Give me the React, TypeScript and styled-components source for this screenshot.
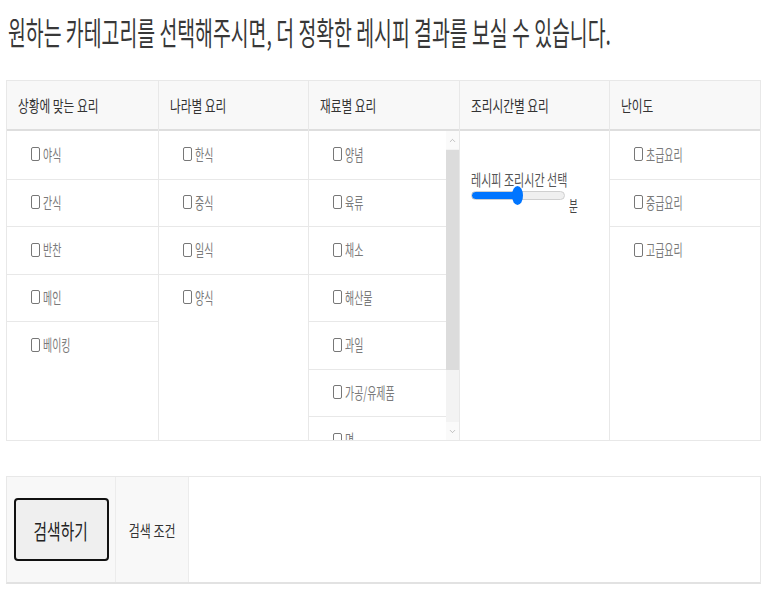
import React, { useState } from 'react';
import styled, { createGlobalStyle } from 'styled-components';
import { ChevronUp, ChevronDown } from 'lucide-react';

const GlobalStyle = createGlobalStyle`
  body {
    margin: 0;
    background: #fff;
    font-family: "Noto Sans CJK KR", "Noto Sans", sans-serif;
    color: #333;
  }
`;

type Column = { title: string; items: string[] };

const columns: Column[] = [
  { title: '상황에 맞는 요리', items: ['야식', '간식', '반찬', '메인', '베이킹'] },
  { title: '나라별 요리', items: ['한식', '중식', '일식', '양식'] },
  { title: '재료별 요리', items: ['양념', '육류', '채소', '해산물', '과일', '가공/유제품', '면', '곡류'] },
  { title: '조리시간별 요리', items: [] },
  { title: '난이도', items: ['초급요리', '중급요리', '고급요리'] },
];

const Page = styled.div`
  padding: 8px 4px 12px 6px;
  overflow: hidden;
`;

const Squash = styled.span<{ $sx: number; $origin?: string }>`
  display: inline-block;
  white-space: nowrap;
  transform: scaleX(${(p) => p.$sx});
  transform-origin: ${(p) => p.$origin || 'left center'};
`;

const Heading = styled.h2`
  margin: 0 0 0 2px;
  font-size: 32px;
  font-weight: 400;
  line-height: 46px;
  color: #383838;
  overflow: hidden;
`;

const Board = styled.div`
  margin-top: 26px;
  display: grid;
  grid-template-columns: repeat(5, 1fr);
  border: 1px solid #e8e8e8;
`;

const Col = styled.div`
  display: flex;
  flex-direction: column;
  min-width: 0;
  overflow: hidden;
  & + & {
    border-left: 1px solid #e8e8e8;
  }
`;

const ColHead = styled.div`
  height: 48px;
  display: flex;
  align-items: center;
  padding-left: 11px;
  background: #f8f8f8;
  border-bottom: 2px solid #dedede;
  font-size: 16px;
  color: #333;
`;

const BodyRow = styled.div`
  display: flex;
  height: 309px;
`;

const ColBody = styled.ul`
  flex: 1;
  list-style: none;
  margin: 0;
  padding: 0;
  overflow: hidden;
`;

const Item = styled.li`
  height: 47.5px;
  box-sizing: border-box;
  display: flex;
  align-items: center;
  padding: 0 0 2px 24px;
  font-size: 16px;
  color: #7a7a7a;
  & + & {
    border-top: 1px solid #e8e8e8;
  }
`;

const Box = styled.span`
  flex: none;
  width: 7px;
  height: 12px;
  border: 1.3px solid #777;
  border-radius: 2px;
  margin-right: 3px;
  margin-top: 1px;
`;

const Rail = styled.div`
  flex: 0 0 13px;
  display: flex;
  flex-direction: column;
  background: #f3f3f3;
`;

const RailButton = styled.div`
  height: 18px;
  flex: none;
  display: flex;
  align-items: center;
  justify-content: center;
  background: #fafafa;
  color: #9a9a9a;
`;

const RailThumb = styled.div`
  margin-top: 1px;
  height: 220px;
  flex: none;
  background: #dcdcdc;
`;

const RailTrack = styled.div`
  flex: 1;
`;

const TimeBody = styled.div`
  padding: 38px 11px 0;
  height: 309px;
  box-sizing: border-box;
`;

const TimeLabel = styled.div`
  font-size: 16px;
  color: #555;
  line-height: 20px;
`;

const SliderRow = styled.div`
  display: flex;
  align-items: flex-start;
  gap: 4px;
`;

const Range = styled.input`
  -webkit-appearance: none;
  appearance: none;
  margin: 2px 0 0;
  width: 94px;
  height: 9px;
  border-radius: 5px;
  border: 1px solid #cfcfcf;
  background: linear-gradient(to right, #0075ff var(--fill), #efefef var(--fill));
  box-sizing: border-box;

  &::-webkit-slider-thumb {
    -webkit-appearance: none;
    width: 11px;
    height: 19px;
    border-radius: 50%;
    background: #0075ff;
    border: none;
  }
`;

const Unit = styled.span`
  font-size: 16px;
  color: #444;
  margin-top: 4px;
`;

const SearchBar = styled.div`
  margin-top: 35px;
  display: flex;
  height: 108px;
  border: 1px solid #e8e8e8;
  border-bottom: 2px solid #e2e2e2;
  box-sizing: border-box;
`;

const SearchCell = styled.div<{ $w?: number; $shade?: boolean }>`
  flex: ${(p) => (p.$w ? `0 0 ${p.$w}px` : '1')};
  display: flex;
  align-items: center;
  justify-content: center;
  background: ${(p) => (p.$shade ? '#f8f8f8' : '#fff')};
  & + & {
    border-left: 1px solid #ececec;
  }
`;

const SearchButton = styled.button`
  width: 95px;
  height: 63px;
  border: 2px solid #111;
  border-radius: 4px;
  background: #efefef;
  font-family: inherit;
  font-size: 21px;
  color: #222;
  padding: 0;
  cursor: pointer;
`;

const CondLabel = styled.span`
  font-size: 16px;
  color: #333;
`;

const App = () => {
  const [minutes, setMinutes] = useState(60);
  const fill = `${(minutes / 120) * 100}%`;

  return (
    <>
      <GlobalStyle />
      <Page>
        <Heading>
          <Squash $sx={0.606}>원하는 카테고리를 선택해주시면, 더 정확한 레시피 결과를 보실 수 있습니다.</Squash>
        </Heading>

        <Board>
          {columns.map((col, i) => (
            <Col key={col.title}>
              <ColHead>
                <Squash $sx={0.73}>{col.title}</Squash>
              </ColHead>
              {i === 3 ? (
                <TimeBody>
                  <TimeLabel>
                    <Squash $sx={0.69}>레시피 조리시간 선택</Squash>
                  </TimeLabel>
                  <SliderRow>
                    <Range
                      type="range"
                      min={0}
                      max={120}
                      value={minutes}
                      onChange={(e) => setMinutes(Number(e.target.value))}
                      style={{ ['--fill' as string]: fill } as React.CSSProperties}
                    />
                    <Unit>
                      <Squash $sx={0.6}>분</Squash>
                    </Unit>
                  </SliderRow>
                </TimeBody>
              ) : (
                <BodyRow>
                  <ColBody>
                    {col.items.map((item) => (
                      <Item key={item}>
                        <Box />
                        <Squash $sx={0.62}>{item}</Squash>
                      </Item>
                    ))}
                  </ColBody>
                  {i === 2 && (
                    <Rail>
                      <RailButton>
                        <ChevronUp size={9} strokeWidth={1.6} />
                      </RailButton>
                      <RailThumb />
                      <RailTrack />
                      <RailButton>
                        <ChevronDown size={9} strokeWidth={1.6} />
                      </RailButton>
                    </Rail>
                  )}
                </BodyRow>
              )}
            </Col>
          ))}
        </Board>

        <SearchBar>
          <SearchCell $w={108} $shade>
            <SearchButton>
              <Squash $sx={0.7} $origin="center">검색하기</Squash>
            </SearchButton>
          </SearchCell>
          <SearchCell $w={72} $shade>
            <CondLabel>
              <Squash $sx={0.75} $origin="center">검색 조건</Squash>
            </CondLabel>
          </SearchCell>
          <SearchCell />
        </SearchBar>
      </Page>
    </>
  );
};

export default App;
